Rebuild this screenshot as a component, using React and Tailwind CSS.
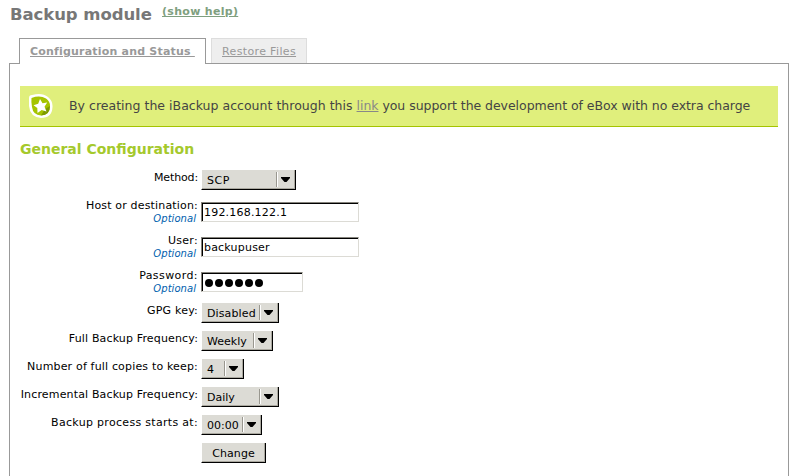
import React from "react";

const Arrow = () => (
  <svg width="9" height="6" viewBox="0 0 9 6" className="shrink-0">
    <path d="M0 0H9V1L5.500 5H3.500L0 1Z" fill="#000" />
  </svg>
);

function Select({ value, width, tracking = "" }) {
  return (
    <div
      className="flex h-5 items-center border-r border-b border-l border-r-black border-b-black border-l-white bg-[#dcdbd5] pl-[5px] pr-[5px] shadow-[inset_-1px_-1px_0_#aaa89f]"
      style={{ width }}
    >
      <span className={`grow whitespace-nowrap pt-[3px] ${tracking}`}>{value}</span>
      <span className="mr-[3px] h-[15px] w-[2px] shrink-0 border-l border-r border-l-[#99978f] border-r-white" />
      <Arrow />
    </div>
  );
}

function Input({ children, width }) {
  return (
    <div
      className="flex h-5 items-center border border-t-[#85837c] border-r-[#dcdbd5] border-b-[#dcdbd5] border-l-[#85837c] bg-white pl-[2px] pt-[2px] tracking-[0.2px] shadow-[inset_1px_1px_0_#000]"
      style={{ width }}
    >
      {children}
    </div>
  );
}

function Row({ label, optional, height, tracking = "", children }) {
  return (
    <div className="flex items-start" style={{ height }}>
      <div className={`mr-[3px] flex w-[188px] shrink-0 flex-col items-end ${optional ? "-mt-[4px]" : ""}`}>
        <div className={`h-4 whitespace-nowrap leading-4 ${tracking}`}>{label}</div>
        {optional && (
          <div className="-mt-[2px] h-3 pr-[2px] text-[10px] italic leading-[14px] tracking-[0.05px] text-[#0060ad]">Optional</div>
        )}
      </div>
      {children}
    </div>
  );
}

const Dots = () => (
  <div className="flex gap-[2px] pl-px">
    {[0, 1, 2, 3, 4, 5].map((i) => (
      <span key={i} className="size-2 rounded-full bg-black" />
    ))}
  </div>
);

const Badge = () => (
  <svg width="26" height="26" viewBox="0 0 26 26">
    <path d="M1 5Q1 2 4 2Q14 -1 20 4Q25 8 24.500 14Q24 25 13 25Q2 24 1 13Z" fill="#fff" />
    <path d="M3.500 5Q12 2 18 5.500Q22 8 22 13Q22 22 13 22.500Q5 22 4 14Q3 9 3.500 5Z" fill="#a5c400" />
    <path d="M22 13Q22 22 13 22.500L17 16Z" fill="#7e9a00" />
    <path d="M12 6L14.500 10.200L19.200 9.500L16.500 13.700L18.500 18.500L13.700 17L9.500 20L9.300 15L5.500 12.200L10.200 10.800Z" fill="#fff" />
  </svg>
);

export default function App() {
  return (
    <div className="h-[476px] w-[801px] overflow-hidden bg-white pl-[9px] font-['DejaVu_Sans',sans-serif] text-[11px] text-black">
      <header className="flex h-[38px] items-start font-bold">
        <h1 className="w-[153px] whitespace-nowrap pl-px pt-[4px] text-[16.5px] leading-[22px] tracking-[-0.07px] text-[#777]">Backup module</h1>
        <a className="pt-[4px] text-[11px] leading-4 tracking-[0.3px] text-[#7f9f7f] underline">(show help)</a>
      </header>
      <nav className="relative z-10 flex h-[26px] items-start pl-[10px] text-[#999]">
        <div className="h-[26px] w-[187px] border border-b-0 border-[#999] bg-white pl-[10px] pt-[5px] font-bold leading-4">
          <span className="whitespace-pre tracking-[0.2px] underline">Configuration and Status </span>
        </div>
        <div className="ml-[5px] h-[25px] w-[96px] border border-b-0 border-[#ddd] bg-[#eee] pl-[10px] pt-[5px] leading-4">
          <span className="whitespace-nowrap tracking-[0.36px] underline">Restore Files</span>
        </div>
      </nav>
      <main className="-mt-px h-[420px] w-[780px] border border-[#999] pl-[10px] pt-[22px]">
        <div className="flex h-[41px] w-[758px] items-center border-b border-[#a5c400] bg-[#e0ef7c] pl-[8px] text-[12.5px] text-[#444]">
          <Badge />
          <p className="whitespace-nowrap pl-[15px] tracking-[-0.045px]">
            <span className="tracking-[0.02px]">By creating the iBackup account through this </span>
            <a className="text-[#888] underline">link</a> you support the development of eBox with no extra charge
          </p>
        </div>
        <h2 className="h-[43px] pt-[12px] text-[14px] font-bold leading-5 text-[#a5c92c]">General Configuration</h2>
        <form className="-ml-[10px]">
          <Row label="Method:" height={32} tracking="tracking-[-0.14px]"><Select value="SCP" width={95} tracking="tracking-[0.5px]" /></Row>
          <Row label="Host or destination:" optional height={35} tracking="tracking-[0.17px]"><Input width={158}>192.168.122.1</Input></Row>
          <Row label="User:" optional height={35} tracking="tracking-[0.3px]"><Input width={158}>backupuser</Input></Row>
          <Row label="Password:" optional height={31} tracking="tracking-[0.42px]"><Input width={102}><Dots /></Input></Row>
          <Row label="GPG key:" height={28} tracking="tracking-[0.2px]"><Select value="Disabled" width={78} tracking="tracking-[0.12px]" /></Row>
          <Row label="Full Backup Frequency:" height={28} tracking="tracking-[0.15px]"><Select value="Weekly" width={72} /></Row>
          <Row label="Number of full copies to keep:" height={28} tracking="tracking-[0.17px]"><Select value="4" width={43} /></Row>
          <Row label="Incremental Backup Frequency:" height={28} tracking="tracking-[0.15px]"><Select value="Daily" width={78} /></Row>
          <Row label="Backup process starts at:" height={28} tracking="tracking-[0.31px]"><Select value="00:00" width={61} /></Row>
          <Row label="" height={28}>
            <div className="flex h-5 w-[65px] items-center justify-center border-r border-b border-l border-r-black border-b-black border-l-white bg-[#dcdbd5] pt-[3px] tracking-[0.1px] shadow-[inset_-1px_-1px_0_#aaa89f]">Change</div>
          </Row>
        </form>
      </main>
    </div>
  );
}
